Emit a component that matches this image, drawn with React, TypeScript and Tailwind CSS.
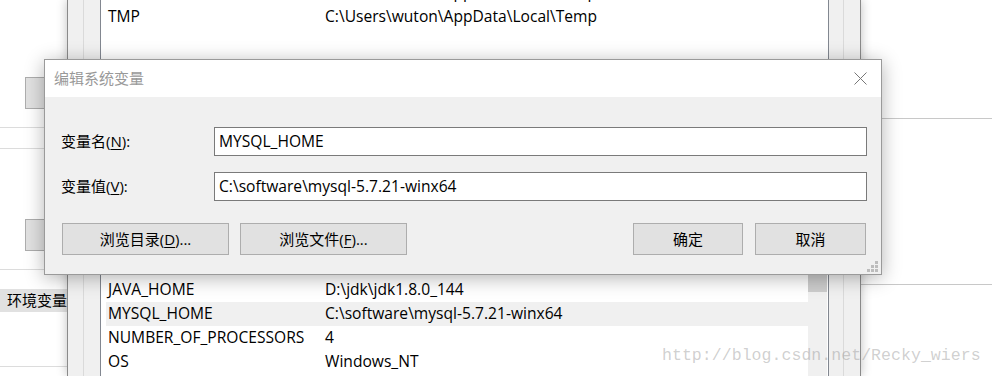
import React from "react";

/* ── fonts ── */
const UI = { fontFamily: '"Open Sans", "Noto Sans CJK SC", sans-serif' };

/* ── data ── */
const TOP_ROWS = [
  { name: "TEMP", value: "C:\\Users\\wuton\\AppData\\Local\\Temp" },
  { name: "TMP", value: "C:\\Users\\wuton\\AppData\\Local\\Temp" },
];

const SYS_ROWS = [
  { name: "DriverData", value: "C:\\Windows\\System32\\Drivers\\DriverData", sel: false },
  { name: "JAVA_HOME", value: "D:\\jdk\\jdk1.8.0_144", sel: false },
  { name: "MYSQL_HOME", value: "C:\\software\\mysql-5.7.21-winx64", sel: true },
  { name: "NUMBER_OF_PROCESSORS", value: "4", sel: false },
  { name: "OS", value: "Windows_NT", sel: false },
];

function Row({ name, value, sel }: { name: string; value: string; sel?: boolean }) {
  return (
    <div className={`flex h-[24px] items-center pl-[2px] text-[15.6px] text-black ${sel ? "bg-[#f0f0f0]" : ""}`}>
      <span className="w-[217px] shrink-0 whitespace-nowrap">{name}</span>
      <span className="whitespace-nowrap">{value}</span>
    </div>
  );
}

function WinButton({ children, w }: { children: React.ReactNode; w: string }) {
  return (
    <div className={`${w} flex h-[32px] items-center justify-center border border-[#adadad] bg-[#e1e1e1] text-[15px] text-black`}>
      {children}
    </div>
  );
}

function Field({ label, hot, value, mt }: { label: string; hot: string; value: string; mt: string }) {
  return (
    <div className={`flex items-center ${mt}`}>
      <span className="w-[153px] shrink-0 text-[15px] text-black">
        {label}(<span className="underline underline-offset-2">{hot}</span>):
      </span>
      <div className="flex h-[29px] flex-1 items-center border border-[#7a7a7a] bg-white pl-[4px] text-[15.6px] text-black">
        {value}
      </div>
    </div>
  );
}

export default function App() {
  return (
    <div className="relative h-[376px] w-[992px] overflow-hidden bg-white" style={UI}>

      {/* ── left window (环境变量 etc.) ── */}
      <div className="absolute left-0 top-0 flex h-full w-[67px] flex-col bg-white">
        <div className="ml-[25px] mt-[77px] h-[32px] border border-[#adadad] bg-[#e1e1e1]" />
        <div className="mt-[18px] h-px bg-[#dcdcdc]" />
        <div className="mt-[20px] h-px bg-[#dcdcdc]" />
        <div className="ml-[25px] mt-[70px] h-[32px] border border-[#adadad] bg-[#e1e1e1]" />
        <div className="mt-[18px] h-px bg-[#dcdcdc]" />
        <div className="mt-[19px] flex h-[23px] items-center bg-[#e1e1e1] pl-[7px] text-[15px] text-black whitespace-nowrap">
          环境变量
        </div>
        <div className="mt-[54px] h-px bg-[#dcdcdc]" />
      </div>

      {/* ── right window fragment ── */}
      <div className="absolute left-[860px] right-0 top-0 flex h-full flex-col bg-white">
        <div className="mt-[118px] h-px bg-[#c8c8c8]" />
        <div className="mt-[165px] h-px bg-[#c8c8c8]" />
      </div>

      {/* ── middle window (variables list) ── */}
      <div className="absolute left-[67px] top-0 flex h-full w-[794px] border-x border-[#8a8a8a] bg-[#f0f0f0] shadow-[0_0_10px_rgba(0,0,0,0.25)]">
        <div className="w-[16px] border-r border-[#dadada]" />
        <div className="w-[16px]" />
        <div className="flex w-[729px] flex-col overflow-hidden border-l border-r border-[#828790] bg-white">
          {/* user variables */}
          <div className="mt-[-19px] pl-[5px] pr-[21px]">
            {TOP_ROWS.map((r) => (
              <Row key={r.name} name={r.name} value={r.value} />
            ))}
          </div>
          <div className="h-[225px]" />
          {/* system variables */}
          <div className="flex flex-1">
            <div className="flex-1 pl-[5px]">
              {SYS_ROWS.map((r) => (
                <Row key={r.name} name={r.name} value={r.value} sel={r.sel} />
              ))}
            </div>
            <div className="mr-px w-[19px] bg-[#f0f0f0] pt-[8px]">
              <div className="h-[30px] bg-[#cdcdcd]" />
            </div>
          </div>
        </div>
        <div className="w-[15px] border-r border-[#dadada]" />
      </div>

      {/* ── 编辑系统变量 dialog ── */}
      <div className="absolute left-[44px] top-[59px] flex h-[216px] w-[838px] flex-col border border-[#9a9a9a] bg-[#f0f0f0] shadow-[0_3px_18px_rgba(0,0,0,0.3)]">
        <div className="flex h-[37px] items-center justify-between bg-white pl-[9px] pr-[14px]">
          <span className="text-[15px] text-[#999999]">编辑系统变量</span>
          <svg width="13" height="13" viewBox="0 0 13 13" className="text-[#777777]">
            <path d="M0.5 0.5 L12.5 12.5 M12.5 0.5 L0.5 12.5" stroke="currentColor" strokeWidth="1" fill="none" />
          </svg>
        </div>

        <div className="relative flex flex-1 flex-col pl-[16px] pr-[14px] pt-[30px]">
          <Field label="变量名" hot="N" value="MYSQL_HOME" mt="mt-0" />
          <Field label="变量值" hot="V" value="C:\software\mysql-5.7.21-winx64" mt="mt-[16px]" />

          <div className="mt-[22px] flex">
            <div className="ml-px flex gap-[11px]">
              <WinButton w="w-[167px]">
                浏览目录(<span className="underline underline-offset-2">D</span>)...
              </WinButton>
              <WinButton w="w-[167px]">
                浏览文件(<span className="underline underline-offset-2">F</span>)...
              </WinButton>
            </div>
            <div className="ml-auto mr-px flex gap-[12px]">
              <WinButton w="w-[110px]">确定</WinButton>
              <WinButton w="w-[111px]">取消</WinButton>
            </div>
          </div>

          {/* resize grip */}
          <svg width="12" height="12" viewBox="0 0 12 12" className="absolute bottom-[1px] right-[2px] text-[#bcbcbc]">
            <rect x="8" y="0" width="3" height="3" fill="currentColor" />
            <rect x="4" y="4" width="3" height="3" fill="currentColor" />
            <rect x="8" y="4" width="3" height="3" fill="currentColor" />
            <rect x="0" y="8" width="3" height="3" fill="currentColor" />
            <rect x="4" y="8" width="3" height="3" fill="currentColor" />
            <rect x="8" y="8" width="3" height="3" fill="currentColor" />
          </svg>
        </div>
      </div>

      {/* ── watermark ── */}
      <div
        className="pointer-events-none absolute left-[662px] top-[344px] whitespace-nowrap text-[16.6px] text-[rgba(150,150,150,0.45)]"
        style={{ fontFamily: '"Liberation Mono", monospace' }}
      >
        http://blog.csdn.net/Recky_wiers
      </div>
    </div>
  );
}
